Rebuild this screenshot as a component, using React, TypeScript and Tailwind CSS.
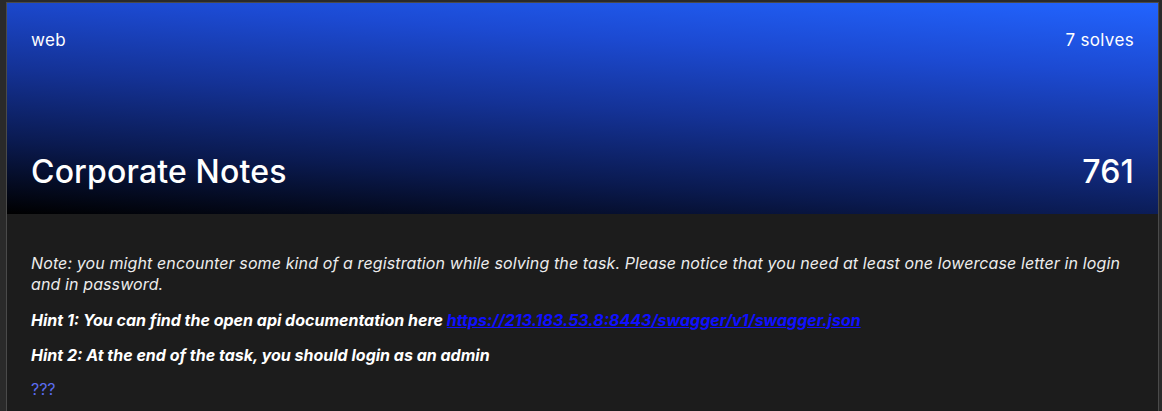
export default function App() {
  return (
    <div className="min-h-[411px] bg-[#2a2a2a] pl-[6px] pr-[3px] pt-[2px] font-['Inter','Noto_Sans',sans-serif]">
      <div className="min-h-[409px] border border-b-0 border-[#4a4a4a] bg-[#1c1c1c]">
        <div className="flex h-[211px] flex-col justify-between bg-[linear-gradient(184deg,#2264ff_0%,#1c4ad2_25%,#143296_50%,#0a1a50_75%,#000000_100%)] px-6 pb-[22px] pt-[25px] text-white">
          <div className="flex items-center justify-between text-[17px] leading-6 tracking-[0.02em]">
            <span>web</span>
            <span>7 solves</span>
          </div>
          <div className="flex items-center justify-between text-[32px] font-medium leading-10 tracking-[0.005em]">
            <span>Corporate Notes</span>
            <span>761</span>
          </div>
        </div>
        <div className="px-6 pb-4 pt-[39px] text-[16px] leading-[21px] text-[#ececec]">
          <p className="italic tracking-[0.007em]">
            Note: you might encounter some kind of a registration while solving the task. Please notice that you need at least one lowercase letter in login and in password.
          </p>
          <p className="mt-[15px] font-bold italic text-white">
            Hint 1: You can find the open api documentation here{' '}
            <a href="#" className="text-[#1010ff] underline">
              https://213.183.53.8:8443/swagger/v1/swagger.json
            </a>
          </p>
          <p className="mt-[14px] font-bold italic text-white">
            Hint 2: At the end of the task, you should login as an admin
          </p>
          <p className="mt-[13px] text-[#5b6cf0]">???</p>
        </div>
      </div>
    </div>
  );
}
